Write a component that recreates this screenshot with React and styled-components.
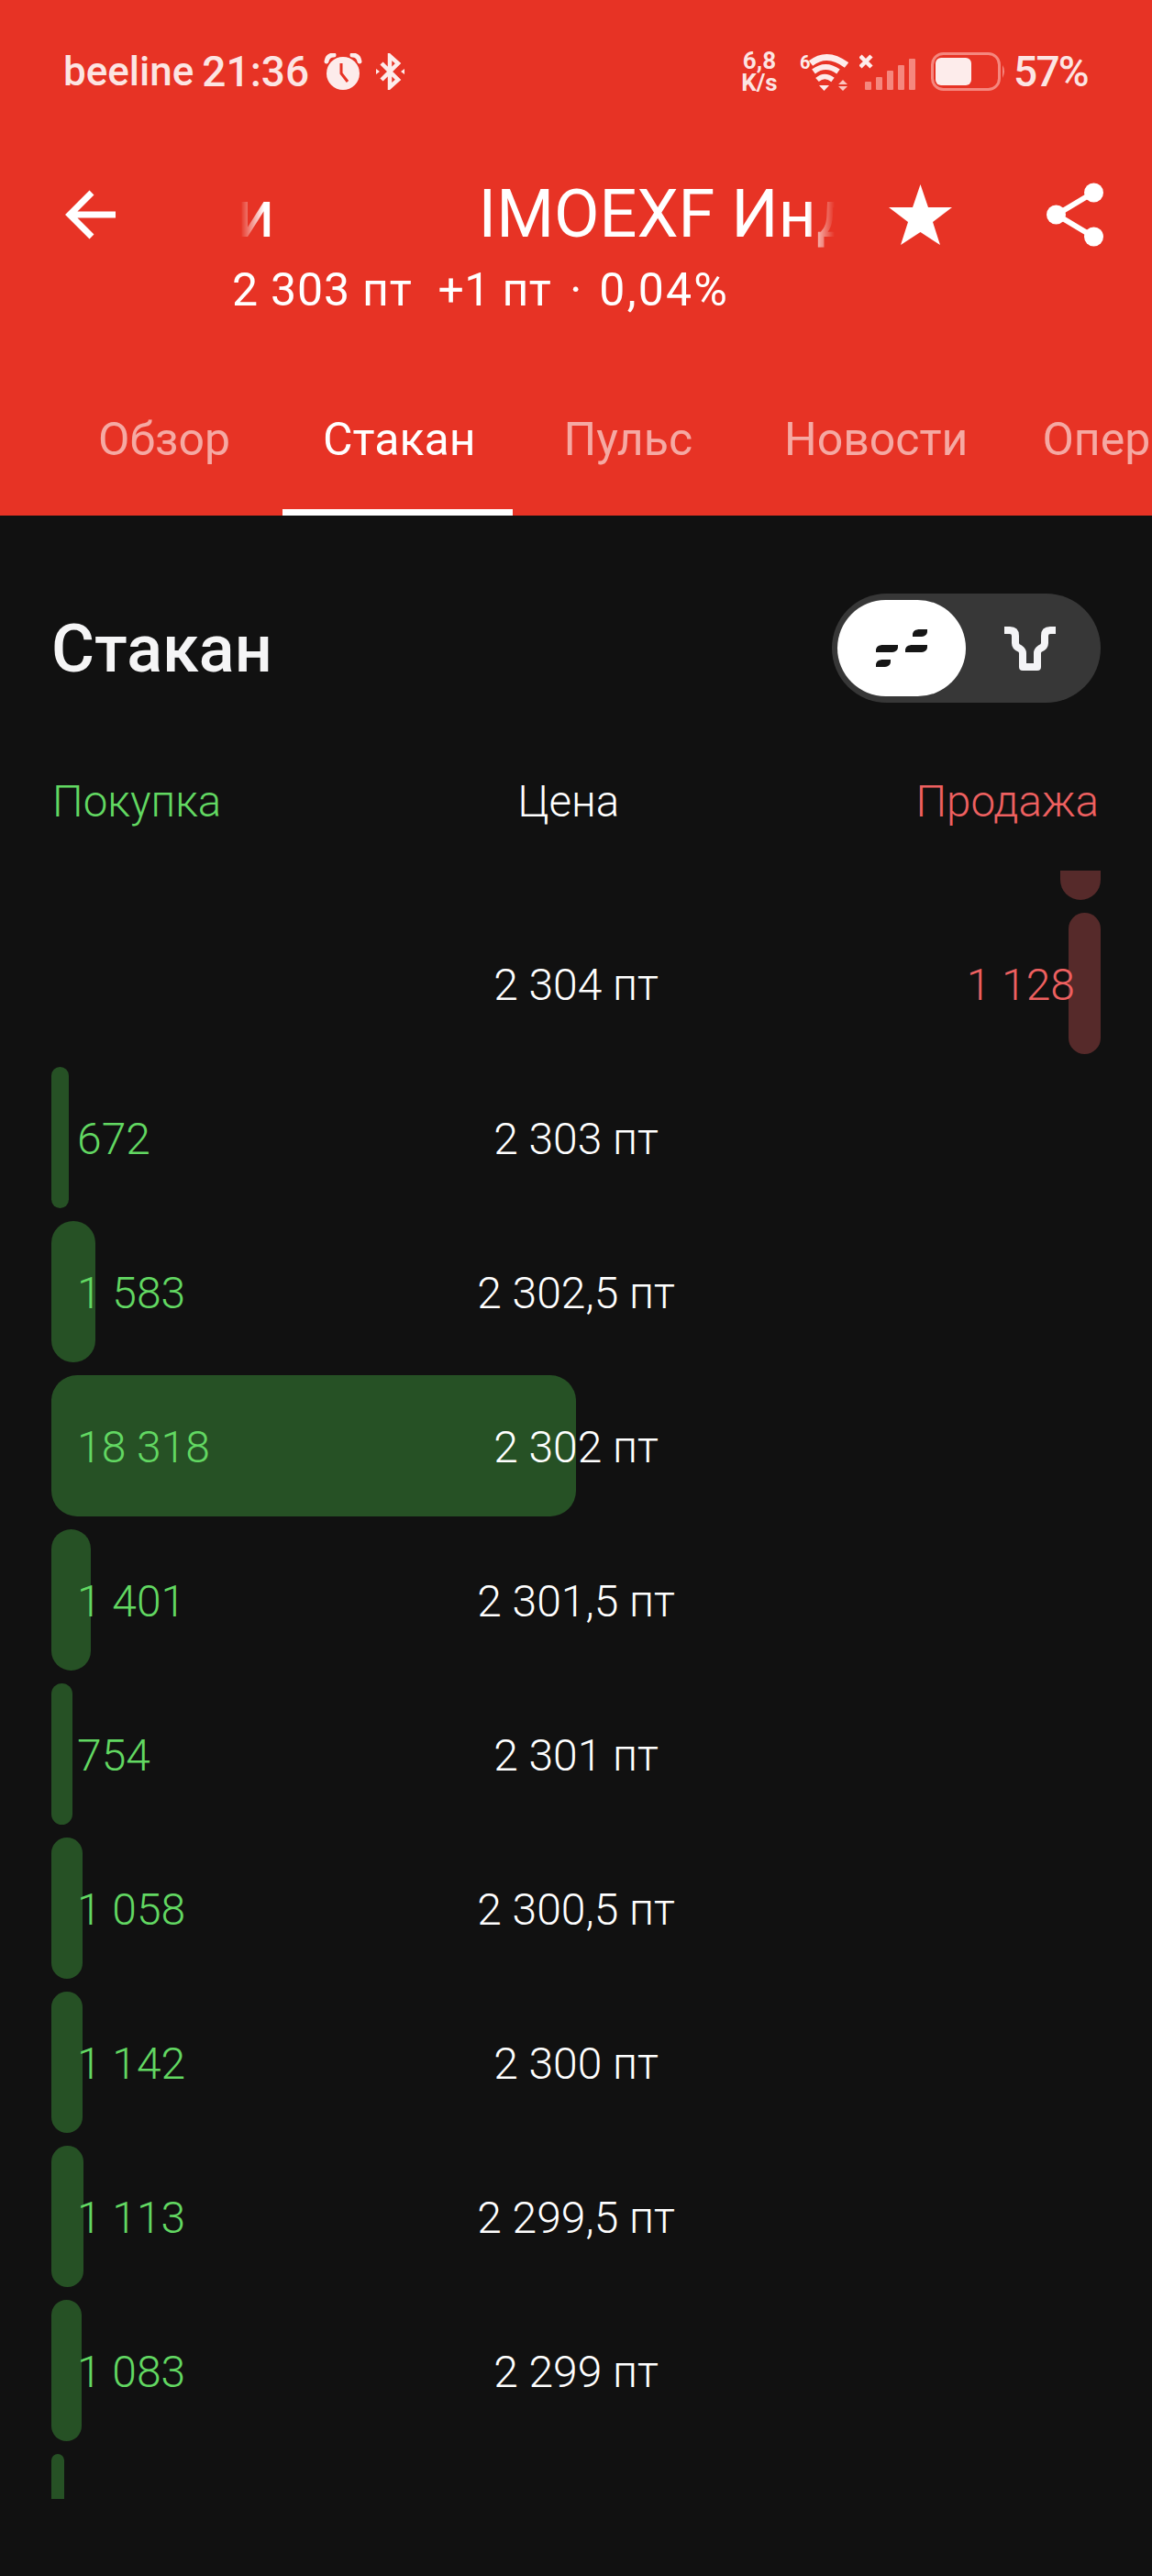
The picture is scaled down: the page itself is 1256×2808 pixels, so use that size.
import React from "react";
import styled, { createGlobalStyle } from "styled-components";

const Global = createGlobalStyle`
  html, body { margin: 0; padding: 0; background: #111111; }
  body { font-family: Roboto, "Noto Sans", sans-serif; width: 1256px; }
  * { box-sizing: border-box; }
`;

const Page = styled.div`
  width: 1256px;
  height: 2808px;
  background: #111111;
  overflow: hidden;
`;
const Header = styled.header`
  background: #e73325;
  height: 562px;
  display: flex;
  flex-direction: column;
  overflow: hidden;
`;
const StatusBar = styled.div`
  height: 156px;
  padding: 0 70px 0 69px;
  display: flex;
  align-items: center;
  justify-content: space-between;
  color: rgba(255, 255, 255, 0.88);
  flex: none;
`;
const StatusGroup = styled.div`
  display: flex;
  align-items: center;
`;
const Carrier = styled.span`
  font-size: 44px;
  font-weight: 500;
  line-height: 50px;
  margin-right: 9px;
`;
const Clock = styled.span`
  font-size: 46px;
  font-weight: 500;
  line-height: 50px;
  margin-right: 16px;
`;
const Speed = styled.div`
  font-size: 26px;
  font-weight: 700;
  line-height: 24px;
  text-align: center;
  width: 44px;
  margin-right: 21px;
`;
const Percent = styled.span`
  font-size: 46px;
  font-weight: 500;
  line-height: 50px;
  letter-spacing: -1.7px;
  margin-left: 8px;
`;
const Icon = styled.svg`
  display: block;
  flex: none;
  margin-left: ${(p) => p.$ml || 0}px;
`;
const NavRow = styled.div`
  height: 76px;
  margin-top: 40px;
  padding-left: 70px;
  display: flex;
  align-items: center;
  flex: none;
`;
const TitleClip = styled.div`
  width: 660px;
  margin-left: 132px;
  overflow: hidden;
  color: #fff;
  font-size: 72px;
  line-height: 76px;
  font-weight: 400;
  white-space: nowrap;
  display: flex;
  -webkit-mask-image: linear-gradient(to right, transparent 4px, #000 30px, #000 622px, transparent 652px);
  mask-image: linear-gradient(to right, transparent 4px, #000 30px, #000 622px, transparent 652px);
`;
const TitleTail = styled.span`
  margin-right: 222px;
`;
const Quote = styled.div`
  margin: 24px 0 0 253px;
  color: #fff;
  font-size: 50px;
  line-height: 40px;
  display: flex;
  white-space: pre;
  flex: none;
`;
const QuotePart = styled.span`
  margin-left: ${(p) => p.$ml || 0}px;
  letter-spacing: ${(p) => p.$ls}px;
`;
const Tabs = styled.nav`
  margin-top: 59px;
  height: 167px;
  display: flex;
  padding-left: 63px;
  flex: none;
  white-space: nowrap;
`;
const Tab = styled.div`
  position: relative;
  padding: 0 ${(p) => (p.$active ? 40 : 44)}px 0 44px;
  margin-right: ${(p) => p.$mr}px;
  font-size: 50px;
  display: flex;
  align-items: center;
  color: ${(p) => (p.$active ? "#fff" : "rgba(255,255,255,0.58)")};
  &::after {
    content: "";
    display: ${(p) => (p.$active ? "block" : "none")};
    position: absolute;
    left: 0;
    right: 0;
    bottom: 0;
    height: 7px;
    background: #fff;
  }
`;
const Body = styled.main`
  padding-top: 85px;
`;
const SectionHead = styled.div`
  padding: 0 56px 0 56px;
  height: 119px;
  display: flex;
  align-items: center;
  justify-content: space-between;
`;
const SectionTitle = styled.h1`
  margin: 2px 0 0;
  color: #f5f5f6;
  font-size: 72px;
  font-weight: 500;
  line-height: 80px;
`;
const Toggle = styled.div`
  width: 293px;
  height: 119px;
  border-radius: 60px;
  background: #373737;
  padding: 7px 7px 7px 6px;
  display: flex;
`;
const ToggleOption = styled.div`
  width: 140px;
  height: 105px;
  border-radius: 53px;
  background: ${(p) => (p.$active ? "#fff" : "transparent")};
  display: flex;
  align-items: center;
  justify-content: center;
`;
const Columns = styled.div`
  margin-top: 78px;
  height: 60px;
  padding: 0 58px 0 57px;
  display: flex;
  align-items: center;
  justify-content: space-between;
  font-size: 47.5px;
  font-weight: 300;
`;
const ColLabel = styled.span`
  color: ${(p) => p.$color};
`;
const Book = styled.div`
  margin-top: 45px;
  height: 1775px;
  overflow: hidden;
`;
const Rows = styled.div`
  margin-top: -129px;
`;
const Row = styled.div`
  position: relative;
  height: 168px;
  padding: 2px 56px 0;
  display: grid;
  grid-template-columns: 1fr auto 1fr;
  align-items: center;
  font-size: 48px;
  font-weight: 300;
`;
const Bar = styled.div`
  position: absolute;
  top: 7px;
  height: 154px;
  border-radius: 28px;
  ${(p) => (p.$side === "buy" ? "left: 56px; background: #265125;" : "right: 56px; background: #562a2a;")}
`;
const Bid = styled.span`
  position: relative;
  color: #62d862;
  padding-left: 28px;
`;
const Price = styled.span`
  position: relative;
  color: #fff;
  text-align: center;
`;
const Ask = styled.span`
  position: relative;
  color: #ee6060;
  text-align: right;
  padding-right: 28px;
`;

const book = [
  { ask: 44 },
  { price: "2 304 пт", ask: 35, askText: "1 128" },
  { price: "2 303 пт", bid: 19, bidText: "672" },
  { price: "2 302,5 пт", bid: 48, bidText: "1 583" },
  { price: "2 302 пт", bid: 572, bidText: "18 318" },
  { price: "2 301,5 пт", bid: 43, bidText: "1 401" },
  { price: "2 301 пт", bid: 23, bidText: "754" },
  { price: "2 300,5 пт", bid: 34, bidText: "1 058" },
  { price: "2 300 пт", bid: 34, bidText: "1 142" },
  { price: "2 299,5 пт", bid: 35, bidText: "1 113" },
  { price: "2 299 пт", bid: 33, bidText: "1 083" },
  { bid: 14 },
];

const Leaf = ({ x, y, w }) => (
  <path
    d={`M${x} ${y + 8} V${y + 6} C${x} ${y + 2} ${x + 3} ${y} ${x + 8} ${y} H${x + w} V${y + 2} C${x + w} ${y + 6} ${x + w - 3} ${y + 8} ${x + w - 8} ${y + 8} Z`}
    fill="#161616"
  />
);

export default function App() {
  return (
    <Page>
      <Global />
      <Header>
        <StatusBar>
          <StatusGroup>
            <Carrier>beeline</Carrier>
            <Clock>21:36</Clock>
            <Icon width="42" height="40" viewBox="0 0 42 40">
              <circle cx="21" cy="22" r="18" fill="#fdeceb" />
              <path d="M3 9 Q4 2 11 2" stroke="#fdeceb" strokeWidth="5" fill="none" strokeLinecap="round" />
              <path d="M39 9 Q38 2 31 2" stroke="#fdeceb" strokeWidth="5" fill="none" strokeLinecap="round" />
              <path d="M19 11 V22 L26 31" stroke="#e73325" strokeWidth="3" fill="none" />
            </Icon>
            <Icon $ml={15} width="31" height="40" viewBox="0 0 31 40">
              <path d="M6 11 L24 29 L15 37 V3 L24 11 L6 29" stroke="#fdeceb" strokeWidth="4.5" fill="none" />
              <path d="M0 17 L4 20 L0 23 Z M31 17 L27 20 L31 23 Z" fill="#fdeceb" />
            </Icon>
          </StatusGroup>
          <StatusGroup>
            <Speed>
              6,8
              <br />
              K/s
            </Speed>
            <Icon width="54" height="42" viewBox="0 0 54 42">
              <text x="1" y="18" fontSize="20" fontWeight="700" fontFamily="Roboto" fill="#fdeceb">6</text>
              <path d="M13 12 Q31 -2 52 14" stroke="#fdeceb" strokeWidth="7" fill="none" />
              <path d="M16 21 Q29 11 43 21" stroke="#fdeceb" strokeWidth="6" fill="none" />
              <path d="M20 30 Q28 23 37 30" stroke="#fdeceb" strokeWidth="5.5" fill="none" />
              <path d="M22 36 H33 L27.5 42 Z" fill="#fdeceb" />
              <path d="M43 35 L48 30 L53 35 Z M43 37 H53 L48 42 Z" fill="#fbc4bf" />
            </Icon>
            <Icon $ml={12} width="61" height="40" viewBox="0 0 61 40">
              <path d="M1 3 L13 15 M13 3 L1 15" stroke="#fdeceb" strokeWidth="4.5" />
              <g fill="#f5877e">
                <rect x="6" y="31" width="7" height="9" rx="1" />
                <rect x="18" y="26" width="7" height="14" rx="1" />
                <rect x="30" y="19" width="7" height="21" rx="1" />
                <rect x="42" y="13" width="7" height="27" rx="1" />
                <rect x="54" y="6" width="7" height="34" rx="1" />
              </g>
            </Icon>
            <Icon $ml={17} width="82" height="42" viewBox="0 0 82 42">
              <rect x="1.5" y="1.5" width="73" height="39" rx="12" fill="none" stroke="#f5877e" strokeWidth="3" />
              <rect x="5" y="6" width="39" height="30" rx="6" fill="#fdeceb" />
              <path d="M78 14 Q82 20 78 28 Z" fill="#f5877e" />
            </Icon>
            <Percent>57%</Percent>
          </StatusGroup>
        </StatusBar>
        <NavRow>
          <Icon width="56" height="56" viewBox="0 0 56 56">
            <path d="M56 28 H6 M30 4 L6 28 L30 52" stroke="#fff" strokeWidth="7" fill="none" />
          </Icon>
          <TitleClip>
            <TitleTail>и</TitleTail>
            <span>IMOEXF Инд</span>
          </TitleClip>
          <Icon $ml={51} width="69" height="66" viewBox="0 0 69 66">
            <path d="M34.5 0 L43 25 H69 L48 41 L56 66 L34.5 52 L13 66 L21 41 L0 25 H26 Z" fill="#fff" />
          </Icon>
          <Icon $ml={103} width="62" height="70" viewBox="0 0 62 70">
            <path d="M51 11 L11 35 L51 59" stroke="#fff" strokeWidth="6" fill="none" />
            <circle cx="51.5" cy="11" r="10.5" fill="#fff" />
            <circle cx="10.5" cy="35" r="10.5" fill="#fff" />
            <circle cx="51.5" cy="59" r="10.5" fill="#fff" />
          </Icon>
        </NavRow>
        <Quote>
          <QuotePart $ls={0.8}>2 303 пт</QuotePart>
          <QuotePart $ml={28} $ls={0.4}>+1 пт</QuotePart>
          <QuotePart $ml={20} $ls={0}>·</QuotePart>
          <QuotePart $ml={19} $ls={2.2}>0,04%</QuotePart>
        </Quote>
        <Tabs>
          <Tab $mr={13}>Обзор</Tab>
          <Tab $mr={12} $active>Стакан</Tab>
          <Tab $mr={12}>Пульс</Tab>
          <Tab $mr={-7}>Новости</Tab>
          <Tab $mr={0}>Операции</Tab>
        </Tabs>
      </Header>
      <Body>
        <SectionHead>
          <SectionTitle>Стакан</SectionTitle>
          <Toggle>
            <ToggleOption $active>
              <Icon width="56" height="41" viewBox="0 0 56 41">
                <Leaf x={40} y={0} w={16} />
                <Leaf x={32} y={17} w={24} />
                <Leaf x={0} y={17} w={24} />
                <Leaf x={0} y={33} w={16} />
              </Icon>
            </ToggleOption>
            <ToggleOption>
              <Icon width="56" height="48" viewBox="0 0 56 48">
                <path
                  d="M0 4 H6 Q12 4 12 10 V18 Q12 22 17 24 Q20 26 20 29 V44 H36 V29 Q36 26 39 24 Q44 22 44 18 V10 Q44 4 50 4 H56"
                  stroke="#f4f4f6"
                  strokeWidth="8"
                  fill="none"
                  strokeLinejoin="round"
                />
              </Icon>
            </ToggleOption>
          </Toggle>
        </SectionHead>
        <Columns>
          <ColLabel $color="#62d862">Покупка</ColLabel>
          <ColLabel $color="#fff">Цена</ColLabel>
          <ColLabel $color="#ee6060">Продажа</ColLabel>
        </Columns>
        <Book>
          <Rows>
            {book.map((r, i) => (
              <Row key={i}>
                {r.bid ? <Bar $side="buy" style={{ width: r.bid }} /> : null}
                {r.ask ? <Bar $side="sell" style={{ width: r.ask }} /> : null}
                <Bid>{r.bidText}</Bid>
                <Price>{r.price}</Price>
                <Ask>{r.askText}</Ask>
              </Row>
            ))}
          </Rows>
        </Book>
      </Body>
    </Page>
  );
}
